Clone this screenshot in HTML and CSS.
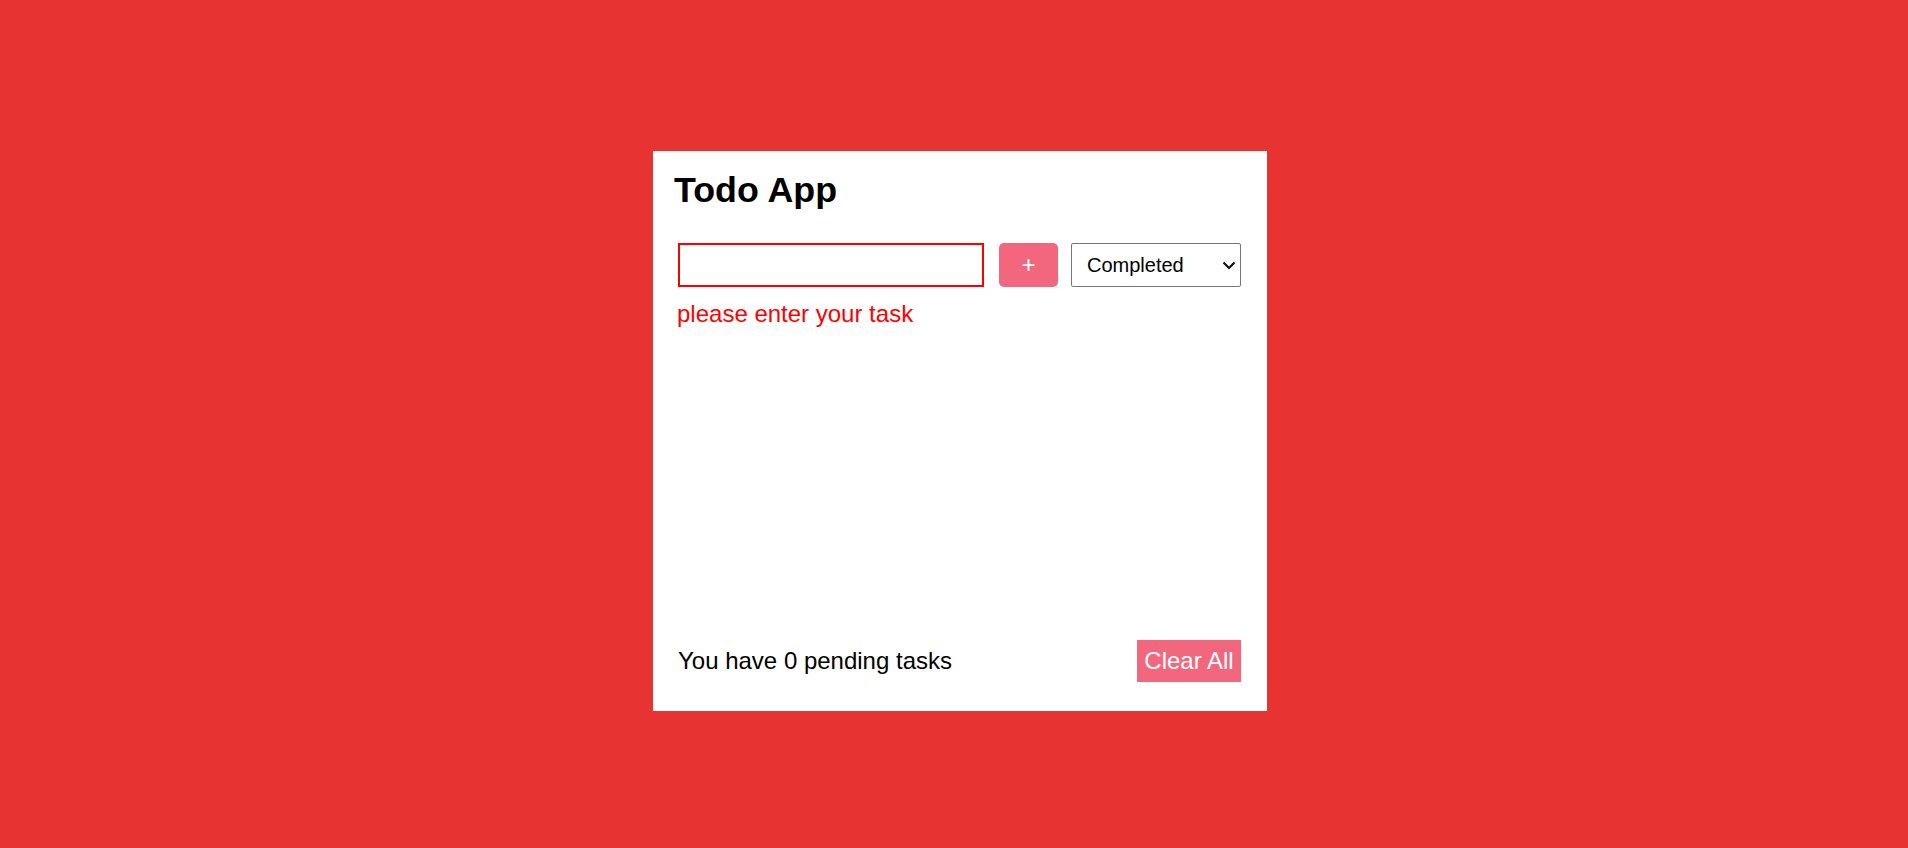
FILE: index.html
```html
<!DOCTYPE html>
<html lang="en">
<head>
<meta charset="utf-8">
<title>Todo App</title>
<link rel="stylesheet" href="styles.css">
</head>
<body>
<div class="page">
  <div class="card">
    <h1 class="title">Todo App</h1>
    <div class="form-row">
      <input class="task-input" type="text">
      <button class="add-btn" type="button">+</button>
      <div class="select-wrap">
        <select class="filter">
          <option>Completed</option>
          <option>All</option>
          <option>Pending</option>
        </select>
        <svg class="chev" width="14" height="9" viewBox="0 0 14 9"><path d="M1.5 1.5 L7 7 L12.5 1.5" fill="none" stroke="#111" stroke-width="2.2"/></svg>
      </div>
    </div>
    <p class="error">please enter your task</p>
    <ul class="list"></ul>
    <div class="footer">
      <span class="pending">You have 0 pending tasks</span>
      <button class="clear-btn" type="button">Clear All</button>
    </div>
  </div>
</div>
</body>
</html>
```

FILE: styles.css
```css
html, body {
  margin: 0;
  padding: 0;
  height: 100%;
}
body {
  background: #e83333;
  font-family: "Liberation Sans", Arial, sans-serif;
  overflow: hidden;
}
.page {
  box-sizing: border-box;
  width: 100%;
  height: 100%;
  padding: 151px 0 0 12px;
  display: flex;
  justify-content: center;
  align-items: flex-start;
}
.card {
  box-sizing: border-box;
  width: 614px;
  height: 560px;
  background: #fff;
  padding: 19px 26px 29px 25px;
  display: flex;
  flex-direction: column;
}
.title {
  margin: 0 0 0 -4px;
  font-size: 35.8px;
  line-height: 41px;
  font-weight: bold;
  color: #000;
}
.form-row {
  margin-top: 32px;
  display: flex;
  height: 44px;
}
.task-input {
  box-sizing: border-box;
  width: 306px;
  height: 44px;
  border: 2px solid #ff0000;
  border-radius: 0;
  outline: none;
  margin: 0;
  padding: 0 10px;
  font-family: "Liberation Sans", Arial, sans-serif;
  font-size: 20px;
}
.add-btn {
  box-sizing: border-box;
  width: 59px;
  height: 44px;
  margin: 0 0 0 15px;
  border: none;
  border-radius: 5px;
  background: #f3677e;
  color: #fff;
  font-family: "Liberation Sans", Arial, sans-serif;
  font-size: 24px;
  line-height: 44px;
  padding: 0;
}
.select-wrap {
  position: relative;
  margin-left: 13px;
  width: 170px;
  height: 44px;
}
.filter {
  box-sizing: border-box;
  width: 170px;
  height: 44px;
  margin: 0;
  border: 1px solid #767676;
  border-radius: 2px;
  background: #fff;
  padding: 0 0 0 15px;
  font-family: "Liberation Sans", Arial, sans-serif;
  font-size: 20px;
  color: #000;
  -webkit-appearance: none;
  appearance: none;
  outline: none;
}
.chev {
  position: absolute;
  left: 151px;
  top: 18px;
  pointer-events: none;
}
.error {
  margin: 13px 0 0 -1px;
  font-size: 24px;
  line-height: 28px;
  color: #ff0000;
}
.list {
  flex: 1;
  margin: 0;
  padding: 0;
  list-style: none;
}
.footer {
  display: flex;
  align-items: center;
  justify-content: space-between;
  height: 42px;
}
.pending {
  margin-left: 0;
  font-size: 24px;
  line-height: 28px;
  color: #000;
}
.clear-btn {
  box-sizing: border-box;
  width: 104px;
  height: 42px;
  margin: 0;
  border: none;
  border-radius: 0;
  background: #f3677e;
  color: #fff;
  font-family: "Liberation Sans", Arial, sans-serif;
  font-size: 24px;
  line-height: 28px;
  padding: 0;
}
```
